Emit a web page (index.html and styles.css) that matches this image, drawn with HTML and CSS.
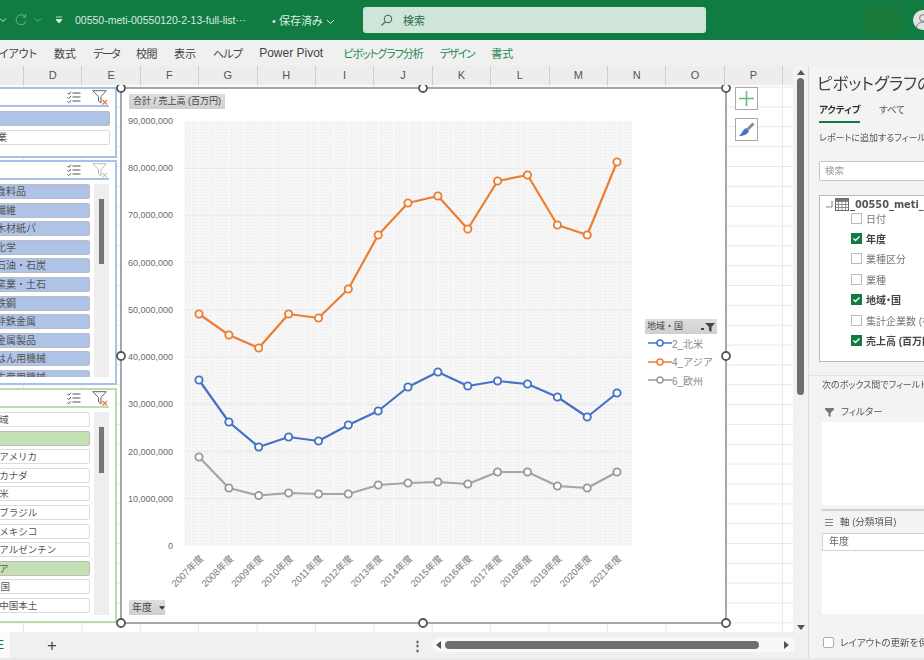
FILE: index.html
```html
<!DOCTYPE html>
<html lang="ja">
<head>
<meta charset="utf-8">
<title>Excel ピボットグラフ</title>
<link rel="stylesheet" href="styles.css">
</head>
<body>
<svg class="defs" width="0" height="0" aria-hidden="true">
  <symbol id="i-multi" viewBox="0 0 14 12">
    <path d="M0.5 2l1.3 1.3L4 0.8M0.5 6.2l1.3 1.3L4 5M0.5 10.4l1.3 1.3L4 9.2" fill="none" stroke="#555" stroke-width="1"/>
    <path d="M5.5 2h8M5.5 6h8M5.5 10h8" stroke="#555" stroke-width="1.2"/>
  </symbol>
  <symbol id="i-funnel" viewBox="0 0 16 15">
    <path d="M0.7 0.7h13.6L9 6.5v6.5L6.5 11V6.5z" fill="#fff" stroke="#666" stroke-width="1"/>
    <path d="M10.5 10l4.5 4.5M15 10l-4.5 4.5" stroke="#ed7d31" stroke-width="1.3"/>
  </symbol>
  <symbol id="i-funnel-off" viewBox="0 0 16 15">
    <path d="M0.7 0.7h13.6L9 6.5v6.5L6.5 11V6.5z" fill="#fff" stroke="#bbb" stroke-width="1"/>
    <path d="M10.5 10l4.5 4.5M15 10l-4.5 4.5" stroke="#ccc" stroke-width="1.2"/>
  </symbol>
</svg>

<div class="page">
  <header class="titlebar">
    <svg class="tb-chevron" width="8" height="6" viewBox="0 0 8 6"><path d="M1 1.5l3 3 3-3" fill="none" stroke="#cfe5d9" stroke-width="1"/></svg>
    <svg class="tb-redo" width="14" height="14" viewBox="0 0 14 14"><path d="M11 3.5A5 5 0 1 0 12 8M11.5 1v3.2H8.3" fill="none" stroke="#6fae8a" stroke-width="1"/></svg>
    <svg class="tb-chevron-dim" width="8" height="6" viewBox="0 0 8 6"><path d="M1 1.5l3 3 3-3" fill="none" stroke="#6fae8a" stroke-width="1"/></svg>
    <svg class="tb-custom" width="8" height="8" viewBox="0 0 8 8"><path d="M1 1h6M1 3.5h6L4 7z" fill="#e4f0e9" stroke="#e4f0e9" stroke-width=".8"/></svg>
    <span class="tb-file">00550-meti-00550120-2-13-full-list···</span>
    <span class="tb-saved">• 保存済み <svg width="9" height="6" viewBox="0 0 9 6"><path d="M1 1l3.5 3.500L8 1" fill="none" stroke="#dcebe3" stroke-width="1"/></svg></span>
    <div class="tb-search">
      <svg width="13" height="13" viewBox="0 0 13 13"><circle cx="8" cy="5" r="3.8" fill="none" stroke="#2f6b4a" stroke-width="1"/><path d="M5.2 7.8L1.5 11.5" stroke="#2f6b4a" stroke-width="1.1"/></svg>
      <span>検索</span>
    </div>
    <div class="tb-block"></div>
    <div class="tb-avatar">
      <svg width="20" height="20" viewBox="0 0 20 20"><circle cx="10" cy="10" r="10" fill="#e3e3e3"/><circle cx="10" cy="8" r="3.4" fill="none" stroke="#777" stroke-width="1"/><path d="M3.5 17c1-4 4-5 6.5-5s5.500 1 6.500 5" fill="none" stroke="#777" stroke-width="1"/></svg>
    </div>
  </header>

  <nav class="ribbon">
    <span>レイアウト</span><span>数式</span><span class="tight-data">データ</span><span class="tight-kou">校閲</span><span>表示</span><span class="tight-help">ヘルプ</span><span class="latin">Power Pivot</span>
    <span class="ctx ctx-first">ピボットグラフ分析</span><span class="ctx tight-des">デザイン</span><span class="ctx">書式</span>
  </nav>

  <div class="work">
    <div class="left">
      <div class="left-top">
        <div class="gridcol">
          <div class="colhead">
            <span class="colhead-lead"></span>
            <span>D</span><span>E</span><span>F</span><span>G</span><span>H</span><span>I</span><span>J</span><span>K</span><span>L</span><span>M</span><span>N</span><span>O</span><span>P</span>
          </div>
          <div class="sheet">
            <div class="slicers">
              <section class="slicer slicer-blue slicer-a">
                <div class="slicer-head"><svg class="ic-multi"><use href="#i-multi"/></svg><svg class="ic-funnel"><use href="#i-funnel"/></svg></div>
                <div class="slicer-body">
                  <ul class="items items-wide">
                    <li class="on-blue"></li>
                    <li>非製造業</li>
                  </ul>
                </div>
              </section>
              <section class="slicer slicer-blue slicer-b">
                <div class="slicer-head"><svg class="ic-multi"><use href="#i-multi"/></svg><svg class="ic-funnel"><use href="#i-funnel-off"/></svg></div>
                <div class="slicer-body">
                  <ul class="items">
                    <li class="on-blue">食料品</li>
                    <li class="on-blue">繊維</li>
                    <li class="on-blue">木材紙パ</li>
                    <li class="on-blue">化学</li>
                    <li class="on-blue">石油・石炭</li>
                    <li class="on-blue">窯業・土石</li>
                    <li class="on-blue">鉄鋼</li>
                    <li class="on-blue">非鉄金属</li>
                    <li class="on-blue">金属製品</li>
                    <li class="on-blue">はん用機械</li>
                    <li class="on-blue">生産用機械</li>
                  </ul>
                  <div class="track"><div class="thumb thumb-b"></div></div>
                </div>
              </section>
              <section class="slicer slicer-green slicer-c">
                <div class="slicer-head"><svg class="ic-multi"><use href="#i-multi"/></svg><svg class="ic-funnel"><use href="#i-funnel"/></svg></div>
                <div class="slicer-body">
                  <ul class="items items-region">
                    <li>01_全地域</li>
                    <li class="on-green">02_北米</li>
                    <li>2_北米_アメリカ</li>
                    <li>2_北米_カナダ</li>
                    <li>03_中南米</li>
                    <li>3_南米_ブラジル</li>
                    <li>3_南米_メキシコ</li>
                    <li>3_南米_アルゼンチン</li>
                    <li class="on-green">04_アジア</li>
                    <li>04_a_中国</li>
                    <li>4_中国_中国本土</li>
                  </ul>
                  <div class="track"><div class="thumb thumb-c"></div></div>
                </div>
              </section>
            </div>

            <div class="chart">
              <svg class="chart-svg" width="605" height="535" viewBox="121 88 605 535">
                <defs>
                  <pattern id="hatch" width="3" height="3" patternUnits="userSpaceOnUse">
                    <rect width="3" height="3" fill="#f6f6f6"/><rect width="1" height="1" fill="#e9e9e9"/>
                  </pattern>
                  <pattern id="vlines" x="184" width="14.93" height="10" patternUnits="userSpaceOnUse">
                    <rect width="1" height="10" fill="#fafafa"/>
                  </pattern>
                  <marker id="mk-blue" viewBox="0 0 10 10" refX="5" refY="5" markerWidth="9.500" markerHeight="9.500" markerUnits="userSpaceOnUse"><circle cx="5" cy="5" r="3.800" fill="#fff" stroke="#4472c4" stroke-width="2"/></marker>
                  <marker id="mk-orange" viewBox="0 0 10 10" refX="5" refY="5" markerWidth="9.500" markerHeight="9.500" markerUnits="userSpaceOnUse"><circle cx="5" cy="5" r="3.800" fill="#fff" stroke="#ed7d31" stroke-width="2"/></marker>
                  <marker id="mk-gray" viewBox="0 0 10 10" refX="5" refY="5" markerWidth="9.500" markerHeight="9.500" markerUnits="userSpaceOnUse"><circle cx="5" cy="5" r="3.800" fill="#fff" stroke="#9a9a9a" stroke-width="2"/></marker>
                </defs>
                <rect x="121" y="88" width="605" height="535" fill="#fff"/>
                <rect x="184" y="121" width="448" height="425" fill="url(#hatch)"/>
                <rect x="184" y="121" width="448" height="425" fill="url(#vlines)"/>
                <path class="majors" d="M184 168.200H632M184 215.400H632M184 262.700H632M184 309.900H632M184 357.100H632M184 404.300H632M184 451.600H632M184 498.800H632"/>
                <g class="ylabels">
                  <text x="173" y="124">90,000,000</text>
                  <text x="173" y="171.200">80,000,000</text>
                  <text x="173" y="218.400">70,000,000</text>
                  <text x="173" y="265.700">60,000,000</text>
                  <text x="173" y="312.900">50,000,000</text>
                  <text x="173" y="360.100">40,000,000</text>
                  <text x="173" y="407.300">30,000,000</text>
                  <text x="173" y="454.600">20,000,000</text>
                  <text x="173" y="501.800">10,000,000</text>
                  <text x="173" y="549">0</text>
                </g>
                <g class="xlabels">
                  <text transform="translate(204 559) rotate(-45)">2007年度</text>
                  <text transform="translate(233.900 559) rotate(-45)">2008年度</text>
                  <text transform="translate(263.700 559) rotate(-45)">2009年度</text>
                  <text transform="translate(293.600 559) rotate(-45)">2010年度</text>
                  <text transform="translate(323.500 559) rotate(-45)">2011年度</text>
                  <text transform="translate(353.300 559) rotate(-45)">2012年度</text>
                  <text transform="translate(383.200 559) rotate(-45)">2013年度</text>
                  <text transform="translate(413 559) rotate(-45)">2014年度</text>
                  <text transform="translate(442.900 559) rotate(-45)">2015年度</text>
                  <text transform="translate(472.800 559) rotate(-45)">2016年度</text>
                  <text transform="translate(502.600 559) rotate(-45)">2017年度</text>
                  <text transform="translate(532.500 559) rotate(-45)">2018年度</text>
                  <text transform="translate(562.400 559) rotate(-45)">2019年度</text>
                  <text transform="translate(592.200 559) rotate(-45)">2020年度</text>
                  <text transform="translate(622 559) rotate(-45)">2021年度</text>
                </g>
                <polyline class="s s-orange" points="199,314 228.900,335 258.700,348 288.600,314 318.500,318 348.300,289 378.200,235 408,203 437.900,196 467.800,229 497.600,181 527.500,175 557.400,225 587.200,235 617,162"/>
                <polyline class="s s-blue" points="199,380 228.900,422 258.700,447 288.600,437 318.500,441 348.300,425 378.200,411 408,387 437.900,372 467.800,386 497.600,381 527.500,384 557.400,397 587.200,417 617,393"/>
                <polyline class="s s-gray" points="199,457 228.900,488 258.700,495.500 288.600,493 318.500,494 348.300,494 378.200,485 408,483 437.900,482 467.800,484 497.600,472 527.500,472 557.400,486 587.200,488 617,472"/>
                <rect class="frame" x="121" y="88" width="605" height="535"/>
                <g class="handles">
                  <circle cx="121" cy="88" r="4"/><circle cx="423" cy="88" r="4"/><circle cx="726" cy="88" r="4"/>
                  <circle cx="121" cy="356" r="4"/><circle cx="726" cy="356" r="4"/>
                  <circle cx="121" cy="623" r="4"/><circle cx="423" cy="623" r="4"/><circle cx="726" cy="623" r="4"/>
                </g>
              </svg>
              <div class="pill pill-value">合計 / 売上高 (百万円)</div>
              <div class="pill pill-year">年度<svg width="7" height="4" viewBox="0 0 7 4"><path d="M0 0h7L3.500 4z" fill="#333"/></svg></div>
              <div class="legend">
                <div class="pill legend-head">地域・国<svg width="14" height="10" viewBox="0 0 14 10"><path d="M4 1h10L10.500 5v5L8 8.500V5z" fill="#444"/><rect x="0" y="6" width="3" height="2" fill="#444"/></svg></div>
                <div class="legend-row"><svg width="24" height="10" viewBox="0 0 24 10"><path d="M0 5h24" stroke="#4472c4" stroke-width="1.500"/><circle cx="12" cy="5" r="3" fill="#fff" stroke="#4472c4" stroke-width="1.500"/></svg>2_北米</div>
                <div class="legend-row"><svg width="24" height="10" viewBox="0 0 24 10"><path d="M0 5h24" stroke="#ed7d31" stroke-width="1.500"/><circle cx="12" cy="5" r="3" fill="#fff" stroke="#ed7d31" stroke-width="1.500"/></svg>4_アジア</div>
                <div class="legend-row"><svg width="24" height="10" viewBox="0 0 24 10"><path d="M0 5h24" stroke="#9a9a9a" stroke-width="1.500"/><circle cx="12" cy="5" r="3" fill="#fff" stroke="#9a9a9a" stroke-width="1.500"/></svg>6_欧州</div>
              </div>
            </div>

            <div class="sidebtns">
              <button class="sidebtn" type="button"><svg width="15" height="15" viewBox="0 0 15 15"><path d="M7.500 0v15M0 7.500h15" stroke="#6cb68a" stroke-width="1.600"/></svg></button>
              <button class="sidebtn" type="button"><svg width="17" height="17" viewBox="0 0 17 17"><path d="M8.500 7.500L14.500 1.500l2 2-6 6z" fill="#8a8a8a"/><path d="M8 7l3 3C9.500 13.500 6 15 1 15c2.500-1.500 3-5.500 7-8z" fill="#4472c4"/></svg></button>
            </div>
          </div>
        </div>
        <div class="vscroll">
          <svg width="8" height="5" viewBox="0 0 8 5"><path d="M4 0l4 5H0z" fill="#555"/></svg>
          <div class="vthumb"></div>
          <svg class="vscroll-down" width="8" height="5" viewBox="0 0 8 5"><path d="M0 0h8L4 5z" fill="#555"/></svg>
        </div>
      </div>

      <footer class="sheetbar">
        <div class="sheettab"><span>E</span></div>
        <div class="sheettab-rest"><span class="addsheet">+</span></div>
        <span class="dots">⋮</span>
        <div class="hscroll">
          <svg width="5" height="8" viewBox="0 0 5 8"><path d="M5 0v8L0 4z" fill="#555"/></svg>
          <div class="hthumb"></div>
          <svg width="5" height="8" viewBox="0 0 5 8"><path d="M0 0v8l5-4z" fill="#555"/></svg>
        </div>
      </footer>
    </div>

    <aside class="pane">
      <h1 class="pane-title">ピボットグラフのフィールド</h1>
      <div class="pane-tabs"><span class="tab-active">アクティブ</span><span>すべて</span></div>
      <p class="pane-hint">レポートに追加するフィールドを選択してください:</p>
      <div class="pane-search">検索</div>
      <div class="fieldlist">
        <div class="fieldroot">
          <svg class="corner" width="7" height="7" viewBox="0 0 7 7"><path d="M6 0v6H0" fill="none" stroke="#888" stroke-width="1"/></svg>
          <svg width="14" height="13" viewBox="0 0 14 13"><rect x=".5" y=".5" width="13" height="12" fill="#fff" stroke="#666"/><path d="M.5 3.500h13M.5 6.500h13M.5 9.500h13M3.500 .5v12M7 .5v12M10.500 .5v12" stroke="#777" stroke-width=".8"/><rect x=".5" y=".5" width="13" height="3" fill="#777"/></svg>
          <span>_00550_meti_00550120</span>
        </div>
        <label class="field"><i class="cb"></i>日付</label>
        <label class="field field-on"><i class="cb cb-on"><svg width="11" height="11" viewBox="0 0 11 11"><path d="M2.500 5.500l2 2 4-4" fill="none" stroke="#fff" stroke-width="1.400"/></svg></i>年度</label>
        <label class="field"><i class="cb"></i>業種区分</label>
        <label class="field"><i class="cb"></i>業種</label>
        <label class="field field-on"><i class="cb cb-on"><svg width="11" height="11" viewBox="0 0 11 11"><path d="M2.500 5.500l2 2 4-4" fill="none" stroke="#fff" stroke-width="1.400"/></svg></i>地域・国</label>
        <label class="field"><i class="cb"></i>集計企業数 (社)</label>
        <label class="field field-on"><i class="cb cb-on"><svg width="11" height="11" viewBox="0 0 11 11"><path d="M2.500 5.500l2 2 4-4" fill="none" stroke="#fff" stroke-width="1.400"/></svg></i>売上高 (百万円)</label>
      </div>
      <div class="pane-sep"></div>
      <p class="pane-hint2">次のボックス間でフィールドをドラッグしてください:</p>
      <div class="area-label area-label-filter"><svg width="9" height="9" viewBox="0 0 9 9"><path d="M0 0h9v1.500L5.500 5v4L3.500 8V5L0 1.500z" fill="#777"/></svg>フィルター</div>
      <div class="area area-filter"></div>
      <div class="area-sep"></div>
      <div class="area-label"><svg width="8" height="7" viewBox="0 0 8 7"><path d="M0 .5h8M0 3.500h8M0 6.500h8" stroke="#888" stroke-width="1"/></svg>軸 (分類項目)</div>
      <div class="area area-axis"><div class="chip">年度</div></div>
      <label class="defer"><i class="defer-box"></i>レイアウトの更新を保留する</label>
    </aside>
  </div>
</div>
</body>
</html>
```

FILE: styles.css
```css
* { box-sizing: border-box; }
html, body { margin: 0; padding: 0; background: #e8e8e8; }
body {
  font-family: "Liberation Sans", "Noto Sans CJK JP", sans-serif;
  font-size: 10px;
  color: #444;
}
.defs { position: absolute; }
.page {
  width: 924px;
  height: 660px;
  overflow: hidden;
  display: flex;
  flex-direction: column;
  filter: blur(0.45px);
  font-feature-settings: "palt";
}

/* title bar */
.titlebar {
  height: 40px;
  flex: none;
  background: #107c41;
  display: flex;
  align-items: center;
  color: #dcebe3;
}
.titlebar > * { flex: none; }
.tb-chevron { margin-left: -1px; }
.tb-redo { margin-left: 7px; }
.tb-chevron-dim { margin-left: 6px; }
.tb-custom { margin-left: 13px; }
.tb-file { margin-left: 12px; font-size: 10.500px; white-space: nowrap; width: 184px; overflow: hidden; }
.tb-saved { margin-left: 13px; font-size: 11px; white-space: nowrap; width: 91px; }
.tb-search {
  width: 343px;
  height: 26px;
  background: #cfe5d9;
  border-radius: 3px;
  display: flex;
  align-items: center;
  padding-left: 17px;
  gap: 10px;
  color: #2f6b4a;
  font-size: 11px;
}
.tb-block { width: 37px; height: 30px; margin-left: 159px; background: #197a3b; }
.tb-avatar { margin-left: 11px; display: flex; }

/* ribbon */
.ribbon {
  height: 26px;
  flex: none;
  background: #f0f0f0;
  display: flex;
  align-items: center;
  gap: 17px;
  padding-left: 0;
  margin-left: -11px;
  font-size: 11px;
  color: #444;
  white-space: nowrap;
}
.ribbon .ctx { color: #1d8a50; }
.ribbon .latin { font-size: 12px; }
.ribbon .tight-data { letter-spacing: -1.600px; }
.ribbon .tight-kou { letter-spacing: -.5px; }
.ribbon .tight-help { letter-spacing: -.8px; }
.ribbon .tight-des { letter-spacing: -1.500px; }
.ribbon .ctx-first { letter-spacing: -1px; margin-left: 3px; }

/* work */
.work { flex: none; height: 592px; display: flex; }
.left { width: 808px; flex: none; display: flex; flex-direction: column; }
.left-top { height: 566px; flex: none; display: flex; }
.gridcol { width: 793px; flex: none; display: flex; flex-direction: column; }

.colhead {
  height: 19px;
  flex: none;
  background: #ededed;
  display: flex;
  align-items: center;
  font-size: 11px;
  color: #555;
}
.colhead-lead { width: 24px; height: 100%; border-right: 1px solid #cfcfcf; }
.colhead span:not(.colhead-lead) {
  width: 58.400px;
  height: 100%;
  line-height: 18px;
  text-align: center;
  border-right: 1px solid #cfcfcf;
  flex: none;
}

.sheet {
  height: 547px;
  flex: none;
  background-color: #fff;
  background-image:
    linear-gradient(to right, #e8e8e8 1px, transparent 1px),
    linear-gradient(to bottom, #e8e8e8 1px, transparent 1px);
  background-size: 58.400px 100%, 100% 19.850px;
  background-position: 23px 0, 0 1.600px;
  display: flex;
  align-items: flex-start;
  padding-top: 2px;
  overflow: hidden;
}

/* slicers */
.slicers {
  width: 117px;
  flex: none;
  display: flex;
  flex-direction: column;
  overflow: hidden;
  height: 536px;
}
.slicer {
  width: 157px;
  margin-left: -40px;
  background: #fff;
  border: 2px solid;
  display: flex;
  flex-direction: column;
  padding-right: 6px;
  flex: none;
}
.slicer-blue { border-color: #a9c1ea; }
.slicer-green { border-color: #bcdca8; }
.slicer-a { height: 71px; }
.slicer-b { height: 225px; margin-top: 2px; }
.slicer-c { height: 235px; margin-top: 3px; }
.slicer-head {
  height: 18px;
  flex: none;
  border-bottom: 2px solid;
  border-color: inherit;
  display: flex;
  justify-content: flex-end;
  align-items: center;
  gap: 11px;
  padding-right: 1px;
}
.ic-multi { width: 14px; height: 12px; }
.ic-funnel { width: 16px; height: 15px; }
.slicer-body { flex: 1; display: flex; padding-top: 4px; gap: 4px; min-height: 0; padding-bottom: 6px; }
.items {
  list-style: none;
  margin: 0;
  padding: 0;
  flex: 1;
  min-width: 0;
  overflow: hidden;
  display: flex;
  flex-direction: column;
  gap: 3.600px;
  font-size: 10px;
  letter-spacing: 0;
  font-feature-settings: "palt" 0;
  color: #555;
}
.items li {
  height: 15px;
  flex: none;
  line-height: 13px;
  padding-left: 33px;
  background: #fff;
  border: 1px solid #dcdcdc;
  border-radius: 2px;
  white-space: nowrap;
  overflow: hidden;
}
.items-wide { flex: none; width: 148px; }
.items-wide li { height: 15px; padding-left: 4px; }
.items-region { font-size: 9.500px; }
.items-region li { padding-left: 1.500px; }
.items li.on-blue { background: #aec3e6; border-color: #b9bcc4; }
.items li.on-green { background: #c5e0b4; border-color: #b9bfb4; }
.track { width: 15px; flex: none; background: #eeeeee; position: relative; padding: 0 5px; }
.thumb { width: 5px; background: #767676; }
.thumb-b { height: 65px; margin-top: 15px; }
.thumb-c { height: 46px; margin-top: 15px; }

/* chart */
.chart {
  position: relative;
  width: 605px;
  height: 535px;
  flex: none;
  margin-left: 4px;
  margin-top: 1px;
  background: #fff;
}
.chart-svg { display: block; overflow: visible; font-feature-settings: "palt" 0; position: relative; }
.majors { stroke: #e9e9e9; stroke-width: 1; fill: none; }
.ylabels text { font-size: 9px; fill: #6a6a6a; text-anchor: end; }
.xlabels text { font-size: 9.500px; fill: #777; text-anchor: end; }
.s { fill: none; stroke-width: 2.200px; stroke-linejoin: round; }
.s-blue { stroke: #4472c4; marker-start: url(#mk-blue); marker-mid: url(#mk-blue); marker-end: url(#mk-blue); }
.s-orange { stroke: #ed7d31; marker-start: url(#mk-orange); marker-mid: url(#mk-orange); marker-end: url(#mk-orange); }
.s-gray { stroke: #a5a5a5; marker-start: url(#mk-gray); marker-mid: url(#mk-gray); marker-end: url(#mk-gray); }
.frame { fill: none; stroke: #8c8c8c; stroke-width: 1.500px; }
.handles circle { fill: #fff; stroke: #555; stroke-width: 1.800px; }
.pill {
  position: absolute;
  height: 15px;
  line-height: 15px;
  background: linear-gradient(#dedede, #cfcfcf);
  font-size: 9px;
  color: #444;
  white-space: nowrap;
  font-feature-settings: "palt" 0;
}
.pill-value { left: 8px; top: 6px; width: 96px; padding-left: 4px; }
.pill-year { left: 8px; top: 512px; width: 36px; padding-left: 3px; display: flex; align-items: center; gap: 7px; font-size: 10px; }
.legend { position: absolute; left: 524px; top: 231px; width: 73px; padding-top: 15px; }
.legend-head { left: 0; top: 0; width: 72px; padding-left: 2px; display: flex; align-items: center; justify-content: space-between; padding-right: 2px; }
.legend-row {
  display: flex;
  align-items: center;
  height: 18.500px;
  margin-left: 3px;
  font-size: 10px;
  color: #888;
  white-space: nowrap;
  font-feature-settings: "palt" 0;
}
.legend-row:first-of-type { margin-top: 1px; }

.sidebtns { margin-left: 9px; display: flex; flex-direction: column; gap: 8px; flex: none; width: 23px; }
.sidebtn {
  width: 23px;
  height: 23px;
  padding: 0;
  background: #fff;
  border: 1px solid #a9a9a9;
  display: flex;
  align-items: center;
  justify-content: center;
}

/* vertical scroll */
.vscroll {
  width: 15px;
  flex: none;
  background: #f2f2f2;
  display: flex;
  flex-direction: column;
  align-items: center;
  padding-top: 4px;
}
.vthumb { width: 7px; height: 317px; margin-top: 3px; background: #6e6e6e; border-radius: 4px; margin-left: -1px; }
.vscroll-down { margin-top: auto; margin-bottom: 2px; }

/* bottom */
.sheetbar { height: 26px; flex: none; background: #f0f0f0; display: flex; align-items: center; position: relative; }
.sheettab { width: 10px; height: 100%; background: #fbfbfb; color: #107c41; font-size: 12px; overflow: hidden; line-height: 26px; text-indent: -4px; flex: none; }
.sheettab-rest { width: 401px; height: 100%; position: relative; display: flex; align-items: center; flex: none; }
.addsheet { margin-left: 37px; font-size: 17px; color: #444; line-height: 1; }
.dots { font-size: 13px; width: 21px; color: #555; font-weight: bold; line-height: 1; flex: none; }
.hscroll {
  width: 362px;
  height: 14px;
  background: #f8f8f8;
  border-radius: 7px 0 0 7px;
  display: flex;
  align-items: center;
  padding-left: 4px;
  padding-right: 5px;
  flex: none;
}
.hthumb { width: 314px; height: 8px; margin-left: 4px; margin-right: auto; background: #6e6e6e; border-radius: 4px; }

/* pane */
.pane {
  width: 116px;
  flex: none;
  background: #f3f3f3;
  border-left: 1px solid #dcdcdc;
  overflow: hidden;
  color: #555;
  white-space: nowrap;
}
.pane > * { width: 300px; }
.pane-title { margin: 7px 0 0 8px; font-size: 16.500px; line-height: 23px; font-weight: 400; color: #444; }
.pane-tabs { margin: 4px 0 0 10px; height: 23px; display: flex; gap: 19px; font-size: 9.500px; line-height: 18px; align-items: flex-start; }
.tab-active { font-weight: 700; color: #333; border-bottom: 2px solid #107c41; height: 23px; width: 41px; padding-top: 1px; }
.pane-tabs span:last-child { padding-top: 1px; }
.pane-hint { margin: 8px 0 0 10px; font-size: 9px; line-height: 14px; }
.pane-search { margin: 16px 0 0 10px; height: 20px; background: #fff; border: 1px solid #c4c4c4; border-radius: 2px; font-size: 9.500px; line-height: 18px; padding-left: 5px; color: #999; }
.fieldlist { margin: 14px 0 0 10px; height: 167px; background: #fff; border: 1px solid #b9b9b9; padding-top: 1px; }
.fieldroot { display: flex; align-items: center; height: 15px; padding-left: 6px; margin-bottom: -4px; font-family: "DejaVu Sans", "Noto Sans CJK JP", sans-serif; font-size: 9.800px; font-weight: 700; color: #555; }
.corner { margin-right: 2px; }
.fieldroot span { margin-left: 1px; }
.field { display: flex; align-items: center; height: 20.400px; padding-left: 31px; font-size: 10px; color: #777; gap: 4px; }
.field-on { font-weight: 700; color: #444; }
.cb { width: 11px; height: 11px; border: 1px solid #bbb; background: #fff; display: block; flex: none; }
.cb-on { background: #107c41; border: 0; }
.cb-on svg { display: block; }
.pane-sep { margin-top: 13px; height: 1px; background: #e2e2e2; }
.pane-hint2 { margin: 2px 0 0 13px; font-size: 9px; line-height: 14px; }
.area-label { margin: 4px 0 0 16px; line-height: 14px; height: 14px; font-size: 9.500px; display: flex; align-items: center; gap: 7px; }
.area-label-filter { margin-top: 13px; }
.area { margin: 3px 0 0 13px; background: #fff; }
.area-filter { height: 83px; }
.area-sep { margin: 4px 0 0 13px; height: 2px; background: #cfcfcf; }
.area-axis { height: 81px; margin-top: 4px; }
.chip { height: 18px; border: 1px solid #d4d4d4; background: #fff; font-size: 10px; line-height: 16px; padding-left: 6px; color: #666; }
.defer { margin: 21px 0 0 14px; height: 14px; display: flex; align-items: center; font-size: 9.500px; gap: 6px; }
.defer-box { width: 11px; height: 11px; background: #fff; border: 1px solid #aaa; border-radius: 2px; display: block; }
```
